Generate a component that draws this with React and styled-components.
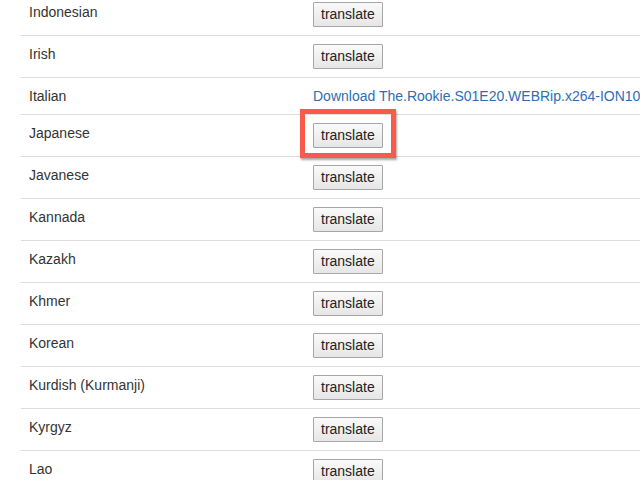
import React from "react";
import styled, { createGlobalStyle } from "styled-components";

const Global = createGlobalStyle`
  html, body { margin: 0; padding: 0; background: #fff; overflow: hidden; }
  body {
    font-family: "Liberation Sans", Helvetica, Arial, sans-serif;
    font-size: 14px;
    line-height: 20px;
    color: #333;
  }
`;

const Page = styled.div`
  width: 640px;
  height: 480px;
  overflow: hidden;
  position: relative;
`;

const Table = styled.div`
  margin: -7px 0 0 21px;
  width: 700px;
  display: flex;
  flex-direction: column;
`;

const Row = styled.div`
  display: grid;
  grid-template-columns: 284px 1fr;
  border-top: 1px solid #ddd;
`;

const Cell = styled.div`
  padding: 8px;
  white-space: nowrap;
  position: relative;
`;

const Button = styled.button`
  display: block;
  box-sizing: border-box;
  height: 25px;
  padding: 0 7px;
  font-family: "Liberation Sans", Helvetica, Arial, sans-serif;
  font-size: 14px;
  line-height: 23px;
  color: #222;
  background: linear-gradient(#fafafa, #e6e6e6);
  border: 1px solid #a6a6a6;
  border-radius: 1px;
  margin: 0;
`;

const Link = styled.a`
  color: #2f6db5;
  text-decoration: none;
`;

const Highlight = styled.div`
  position: absolute;
  left: -5px;
  top: -6px;
  width: 96px;
  height: 49px;
  box-sizing: border-box;
  border: 5px solid #f85a4c;
  box-shadow: 1px 2px 2px rgba(0, 0, 0, 0.35);
  pointer-events: none;
`;

const rows = [
  { name: "Indonesian" },
  { name: "Irish" },
  { name: "Italian", link: "Download The.Rookie.S01E20.WEBRip.x264-ION10" },
  { name: "Japanese", highlight: true },
  { name: "Javanese" },
  { name: "Kannada" },
  { name: "Kazakh" },
  { name: "Khmer" },
  { name: "Korean" },
  { name: "Kurdish (Kurmanji)" },
  { name: "Kyrgyz" },
  { name: "Lao" },
];

export default function App() {
  return (
    <Page>
      <Global />
      <Table>
        {rows.map((r) => (
          <Row key={r.name}>
            <Cell>{r.name}</Cell>
            <Cell>
              {r.link ? (
                <Link href="#">{r.link}</Link>
              ) : (
                <>
                  <Button>translate</Button>
                  {r.highlight && <Highlight />}
                </>
              )}
            </Cell>
          </Row>
        ))}
      </Table>
    </Page>
  );
}
